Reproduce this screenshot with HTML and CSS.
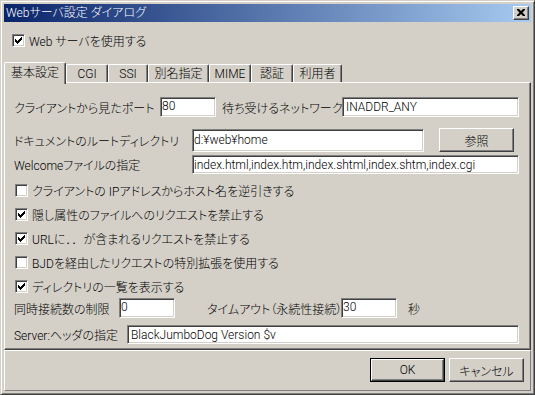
FILE: index.html
```html
<!DOCTYPE html>
<html lang="ja">
<head>
<meta charset="utf-8">
<title>Webサーバ設定 ダイアログ</title>
<link rel="stylesheet" href="styles.css">
</head>
<body>
<div class="window">
  <div class="titlebar">
    <span class="title">Webサーバ設定 ダイアログ</span>
    <span class="close-btn"><svg width="8" height="7" viewBox="0 0 8 7"><path d="M0 0h2l2 2l2-2h2v1l-2.5 2.5l2.5 2.5v1h-2l-2-2l-2 2h-2v-1l2.5-2.5l-2.5-2.5z" fill="#000"/></svg></span>
  </div>
  <div class="client">
    <label class="check top-check"><span class="box on"></span><span>Web サーバを使用する</span></label>

    <div class="tabs">
      <span class="tab active">基本設定</span>
      <span class="tab w42">CGI</span>
      <span class="tab w40">SSI</span>
      <span class="tab w61">別名指定</span>
      <span class="tab w42">MIME</span>
      <span class="tab w42">認証</span>
      <span class="tab w49">利用者</span>
    </div>

    <div class="page">
      <div class="row r1">
        <span class="lbl w146">クライアントから見たポート</span>
        <input class="field short top" value="80">
        <span class="lbl net">待ち受けるネットワーク</span>
        <input class="field net-field" value="INADDR_ANY">
      </div>
      <div class="row r2">
        <span class="lbl w178">ドキュメントのルートディレクトリ</span>
        <input class="field doc-field" value="d:¥web¥home">
        <span class="btn browse">参照</span>
      </div>
      <div class="row r3">
        <span class="lbl w178">Welcomeファイルの指定</span>
        <input class="field wide" value="index.html,index.htm,index.shtml,index.shtm,index.cgi">
      </div>
      <div class="checks">
        <label class="check crow"><span class="box"></span><span>クライアントの IPアドレスからホスト名を逆引きする</span></label>
        <label class="check crow"><span class="box on"></span><span>隠し属性のファイルへのリクエストを禁止する</span></label>
        <label class="check crow"><span class="box on"></span><span>URLに<span class="fw">．．</span>が含まれるリクエストを禁止する</span></label>
        <label class="check crow"><span class="box"></span><span>BJDを経由したリクエストの特別拡張を使用する</span></label>
        <label class="check crow"><span class="box on"></span><span>ディレクトリの一覧を表示する</span></label>
      </div>
      <div class="row r4">
        <span class="lbl w105">同時接続数の制限</span>
        <input class="field short top" value="0">
        <span class="lbl timeout">タイムアウト（永続性接続）</span>
        <input class="field short top" value="30">
        <span class="lbl sec">秒</span>
      </div>
      <div class="row r5">
        <span class="lbl w113">Server:ヘッダの指定</span>
        <input class="field server" value="BlackJumboDog Version $v">
      </div>
    </div>

    <div class="footer">
      <span class="btn default"><span class="btn-inner">OK</span></span>
      <span class="btn">キャンセル</span>
    </div>
  </div>
</div>
</body>
</html>
```

FILE: styles.css
```css
* { box-sizing: border-box; }
html, body { margin: 0; padding: 0; }
body {
  width: 535px;
  height: 395px;
  background: #d4d0c8;
  font-family: Roboto, "Noto Sans CJK JP", sans-serif;
  font-size: 12px;
  font-weight: 300;
  font-feature-settings: "palt";
  color: #000;
  overflow: hidden;
}
.window {
  width: 535px;
  height: 395px;
  border: 1px solid;
  border-color: #d4d0c8 #404040 #404040 #d4d0c8;
  box-shadow: inset 1px 1px 0 #fff, inset -1px -1px 0 #808080;
  padding: 3px;
  display: flex;
  flex-direction: column;
}
.titlebar {
  height: 18px;
  background: linear-gradient(to right, #0a246a, #a6caf0);
  display: flex;
  align-items: center;
  justify-content: space-between;
  padding: 0 2px;
  flex-shrink: 0;
}
.title {
  color: #fff;
  line-height: 16px;
}
.close-btn {
  width: 16px;
  height: 14px;
  background: #d4d0c8;
  border: 1px solid;
  border-color: #fff #404040 #404040 #fff;
  box-shadow: inset -1px -1px 0 #808080;
  display: flex;
  align-items: center;
  justify-content: center;
  padding: 0 1px 1px 0;
}
.close-btn svg { display: block; }
.client {
  flex: 1;
  display: flex;
  flex-direction: column;
}
.check {
  display: flex;
  align-items: center;
  gap: 4px;
}
.box {
  width: 13px;
  height: 13px;
  flex-shrink: 0;
  background: #fff;
  border: 1px solid;
  border-color: #808080 #fff #fff #808080;
  box-shadow: inset 1px 1px 0 #404040, inset -1px -1px 0 #d4d0c8;
  position: relative;
}
.box.on::after {
  content: "";
  position: absolute;
  left: 2px;
  top: 2px;
  width: 7px;
  height: 7px;
  background: url("data:image/svg+xml;utf8,<svg xmlns='http://www.w3.org/2000/svg' width='7' height='7' viewBox='0 0 7 7'><path d='M0 2h1v1h1v1h1v-1h1v-1h1v-1h1v-1h1v3h-1v1h-1v1h-1v1h-1v1h-1v-1h-1v-1h-1v-1h-1z' fill='black'/></svg>") no-repeat;
}
.fw {
  font-feature-settings: normal;
  font-family: "Noto Sans CJK JP", sans-serif;
}
.top-check {
  margin: 12px 0 0 8px;
  height: 13px;
  gap: 4px;
}
.tabs {
  margin-top: 15px;
  height: 20px;
  display: flex;
  align-items: flex-end;
  position: relative;
  z-index: 1;
}
.tab {
  height: 18px;
  border-top: 1px solid #fff;
  border-left: 1px solid #fff;
  border-right: 1px solid #404040;
  border-radius: 2px 2px 0 0;
  box-shadow: inset -1px 0 0 #808080;
  display: flex;
  align-items: center;
  justify-content: center;
  line-height: 16px;
  padding-top: 1px;
}
.tab.active {
  width: 62px;
  height: 22px;
  margin-bottom: -2px;
  background: #d4d0c8;
  padding-bottom: 2px;
}
.w40 { width: 40px; }
.w42 { width: 42px; }
.w49 { width: 49px; }
.w61 { width: 61px; }
.page {
  height: 268px;
  border: 1px solid;
  border-color: #fff #404040 #404040 #fff;
  box-shadow: inset -1px -1px 0 #808080;
  padding: 14px 0 0 9px;
  display: flex;
  flex-direction: column;
}
.row {
  display: flex;
  align-items: center;
}
.lbl { white-space: nowrap; flex-shrink: 0; }
.w146 { width: 146px; }
.w178 { width: 178px; }
.w105 { width: 105px; }
.w113 { width: 113px; }
.field {
  font: inherit;
  background: #fff;
  border: 1px solid;
  border-color: #808080 #fff #fff #808080;
  box-shadow: inset 1px 1px 0 #404040, inset -1px -1px 0 #d4d0c8;
  padding: 0 1px;
  outline: none;
  margin: 0;
  color: #000;
}
.field.top { padding-bottom: 3px; }
.r1 { height: 20px; }
.r1 .field { height: 20px; }
.short { width: 56px; }
.net { margin-left: 6px; width: 120px; }
.net-field { width: 177px; padding-left: 3px; }
.r2 { margin-top: 11px; height: 24px; }
.doc-field { width: 232px; height: 23px; }
.btn {
  display: flex;
  align-items: center;
  justify-content: center;
  width: 75px;
  height: 24px;
  background: #d4d0c8;
  border: 1px solid;
  border-color: #fff #404040 #404040 #fff;
  box-shadow: inset -1px -1px 0 #808080;
}
.browse { margin-left: 15px; }
.r3 { margin-top: 3px; height: 19px; }
.wide { width: 327px; height: 19px; }
.checks {
  margin-top: 4px;
  display: flex;
  flex-direction: column;
}
.crow {
  height: 24px;
  padding-left: 1px;
}
.r4 { height: 20px; }
.r4 .field { height: 20px; }
.timeout { margin-left: 32px; width: 134px; }
.sec { margin-left: 11px; }
.r5 { margin-top: 7px; height: 19px; }
.server { width: 392px; height: 19px; padding-left: 3px; }
.footer {
  flex: 1;
  border: 1px solid;
  border-color: #fff #808080 #808080 #fff;
  display: flex;
  justify-content: flex-end;
  align-items: flex-start;
  padding: 7px 6px 0 0;
  gap: 4px;
}
.btn.default {
  border: 1px solid #000;
  box-shadow: none;
  padding: 0;
}
.btn-inner {
  width: 100%;
  height: 100%;
  display: flex;
  align-items: center;
  justify-content: center;
  border: 1px solid;
  border-color: #fff #404040 #404040 #fff;
  box-shadow: inset -1px -1px 0 #808080;
}
```
